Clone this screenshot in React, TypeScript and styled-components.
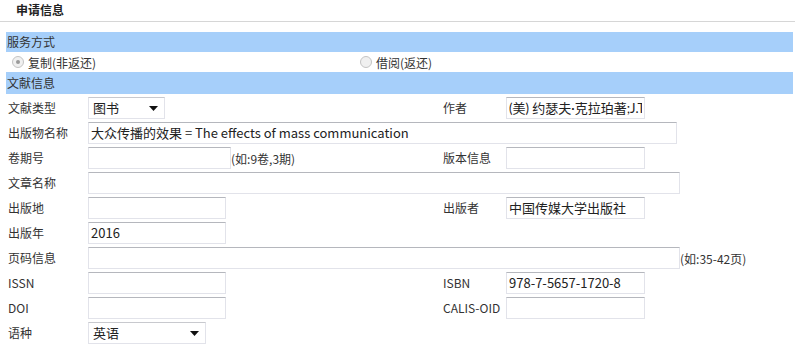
import styled, { createGlobalStyle } from 'styled-components';

const GlobalStyle = createGlobalStyle`
  body {
    margin: 0;
    background: #fff;
    font-family: "Noto Sans CJK SC", "Noto Sans", sans-serif;
    font-size: 12px;
    color: #333;
  }
`;

type Field = {
  label: string;
  value?: string;
  width: number;
  hint?: string;
  select?: boolean;
  wide?: boolean;
  latin?: boolean;
};

type Row = { left: Field; right?: Field };

const rows: Row[] = [
  {
    left: { label: '文献类型', value: '图书', width: 77, select: true },
    right: { label: '作者', value: '(美) 约瑟夫·克拉珀著;J.T. Klapper', width: 139, latin: true },
  },
  { left: { label: '出版物名称', value: '大众传播的效果 = The effects of mass communication', width: 589, wide: true } },
  { left: { label: '卷期号', width: 143, hint: '(如:9卷,3期)' }, right: { label: '版本信息', width: 139 } },
  { left: { label: '文章名称', width: 592, wide: true } },
  { left: { label: '出版地', width: 138 }, right: { label: '出版者', value: '中国传媒大学出版社', width: 139 } },
  { left: { label: '出版年', value: '2016', width: 138 } },
  { left: { label: '页码信息', width: 592, wide: true, hint: '(如:35-42页)' } },
  { left: { label: 'ISSN', width: 138 }, right: { label: 'ISBN', value: '978-7-5657-1720-8', width: 139 } },
  { left: { label: 'DOI', width: 138 }, right: { label: 'CALIS-OID', width: 139 } },
  { left: { label: '语种', value: '英语', width: 118, select: true } },
];

function FieldControl({ field }: { field: Field }) {
  if (field.select) {
    return (
      <SelectBox $width={field.width}>
        <span>{field.value}</span>
        <Arrow width="9" height="5" viewBox="0 0 9 5">
          <path d="M0 0h9L4.5 5z" fill="#111" />
        </Arrow>
      </SelectBox>
    );
  }
  return (
    <FieldWrap>
      <TextInput $width={field.width} $latin={field.latin} defaultValue={field.value ?? ''} />
      {field.hint && <Hint>{field.hint}</Hint>}
    </FieldWrap>
  );
}

export default function App() {
  return (
    <Page>
      <GlobalStyle />
      <Header>申请信息</Header>
      <Band $height={20}>服务方式</Band>
      <RadioRow>
        <RadioItem>
          <Radio $checked />
          复制(非返还)
        </RadioItem>
        <RadioItem>
          <Radio />
          借阅(返还)
        </RadioItem>
      </RadioRow>
      <Band $height={22}>文献信息</Band>
      {rows.map((row) => (
        <FormRow key={row.left.label}>
          <Label>{row.left.label}</Label>
          <Cell $wide={row.left.wide}>
            <FieldControl field={row.left} />
          </Cell>
          {row.right && (
            <>
              <Label>{row.right.label}</Label>
              <Cell>
                <FieldControl field={row.right} />
              </Cell>
            </>
          )}
        </FormRow>
      ))}
    </Page>
  );
}

const Page = styled.div`
  width: 800px;
  height: 346px;
  overflow: hidden;
`;

const Header = styled.div`
  width: 795px;
  height: 22px;
  box-sizing: border-box;
  padding-left: 16px;
  line-height: 19px;
  font-weight: bold;
  color: #222;
  border-bottom: 1px solid #d6d6d6;
  margin-bottom: 10px;
`;

const Band = styled.div<{ $height: number }>`
  margin-left: 6px;
  width: 787px;
  height: ${({ $height }) => $height}px;
  line-height: ${({ $height }) => $height}px;
  background: #a6cffa;
  padding-left: 1px;
  box-sizing: border-box;
  color: #333;
`;

const RadioRow = styled.div`
  display: grid;
  grid-template-columns: 348px 1fr;
  height: 20px;
  align-items: center;
  padding-left: 6px;
`;

const RadioItem = styled.label`
  display: flex;
  align-items: center;
  gap: 4px;
  padding-left: 6px;
  color: #333;
`;

const Radio = styled.span<{ $checked?: boolean }>`
  position: relative;
  width: 10px;
  height: 10px;
  border-radius: 50%;
  border: 1px solid #c4c4c4;
  background: #f0f0f0;

  &::after {
    content: '';
    display: ${({ $checked }) => ($checked ? 'block' : 'none')};
    position: absolute;
    left: 3px;
    top: 3px;
    width: 4px;
    height: 4px;
    border-radius: 50%;
    background: #9a9a9a;
  }
`;

const FormRow = styled.div`
  display: grid;
  grid-template-columns: 82px 353px 65px 1fr;
  height: 25px;
  align-items: center;
  padding-left: 6px;
`;

const Label = styled.div`
  padding-left: 2px;
  padding-top: 1px;
  white-space: nowrap;
  color: #333;
`;

const Cell = styled.div<{ $wide?: boolean }>`
  grid-column: ${({ $wide }) => ($wide ? '2 / 5' : 'auto')};
  display: flex;
  align-items: center;
  min-width: 0;
`;

const FieldWrap = styled.div`
  display: flex;
  align-items: center;
`;

const TextInput = styled.input<{ $width: number; $latin?: boolean }>`
  width: ${({ $width }) => $width}px;
  height: 22px;
  box-sizing: border-box;
  border: 1px solid #e2e3ea;
  border-top-color: #b5b7bd;
  padding: 0 2px;
  font-family: ${({ $latin }) => ($latin ? 'Lato, ' : '')}"Noto Sans CJK SC", "Noto Sans", sans-serif;
  font-size: 13px;
  color: #222;
  outline: none;
  margin: 2px 0 0;
`;

const Hint = styled.span`
  white-space: nowrap;
  padding-top: 4px;
  color: #333;
`;

const SelectBox = styled.div<{ $width: number }>`
  position: relative;
  width: ${({ $width }) => $width}px;
  height: 22px;
  box-sizing: border-box;
  border: 1px solid #e2e3ea;
  border-top-color: #c8c9ce;
  display: flex;
  align-items: center;
  padding-left: 4px;
  font-size: 13px;
  color: #222;
  margin-top: 2px;
`;

const Arrow = styled.svg`
  position: absolute;
  right: 6px;
  top: 8px;
`;
